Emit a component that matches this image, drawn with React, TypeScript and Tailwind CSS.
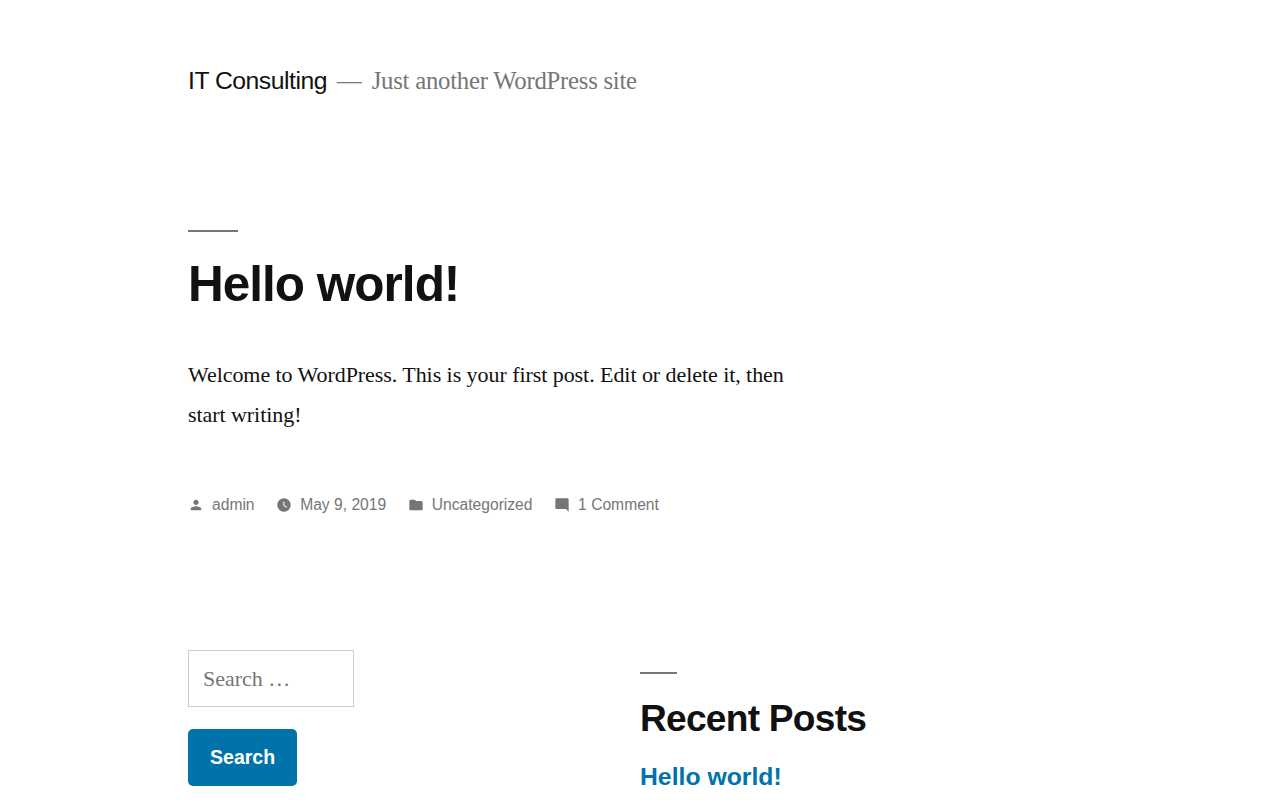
const sans = "font-['Liberation_Sans',Arial,sans-serif]";
const serif = "font-['Liberation_Serif','Times_New_Roman',serif]";

function PersonIcon() {
  return (
    <svg viewBox="0 0 24 24" className="h-4 w-4 fill-current">
      <path d="M12 12c2.21 0 4-1.79 4-4s-1.79-4-4-4-4 1.79-4 4 1.79 4 4 4zm0 2c-2.67 0-8 1.34-8 4v2h16v-2c0-2.66-5.33-4-8-4z" />
    </svg>
  );
}

function ClockIcon() {
  return (
    <svg viewBox="0 0 24 24" className="h-4 w-4 fill-current">
      <path d="M11.99 2C6.47 2 2 6.48 2 12s4.47 10 9.99 10C17.52 22 22 17.52 22 12S17.52 2 11.99 2zM16.2 16.2L11 13V7h1.5v5.2l4.5 2.7-.8 1.3z" />
    </svg>
  );
}

function FolderIcon() {
  return (
    <svg viewBox="0 0 24 24" className="h-4 w-4 fill-current">
      <path d="M10 4H4c-1.1 0-1.99.9-1.99 2L2 18c0 1.1.9 2 2 2h16c1.1 0 2-.9 2-2V8c0-1.1-.9-2-2-2h-8l-2-2z" />
    </svg>
  );
}

function CommentIcon() {
  return (
    <svg viewBox="0 0 24 24" className="h-4 w-4 fill-current">
      <path d="M21.99 4c0-1.1-.89-2-1.99-2H4c-1.1 0-2 .9-2 2v12c0 1.1.9 2 2 2h14l4 4-.01-18z" />
    </svg>
  );
}

function MetaItem({ icon, label }: { icon: React.ReactNode; label: string }) {
  return (
    <span className="flex items-center gap-2">
      {icon}
      <span>{label}</span>
    </span>
  );
}

export default function App() {
  return (
    <div className={`h-[800px] overflow-hidden bg-white px-[188px] text-[#111] antialiased ${sans}`}>
      <header className="flex h-[162px] items-start pt-[64px] text-[24.75px] leading-[34px]">
        <span className="tracking-[-0.02em]">IT Consulting</span>
        <span className={`ml-[10px] mr-[10px] text-[#767676] ${serif}`}>—</span>
        <span className={`tracking-[-0.01em] text-[#767676] ${serif}`}>Just another WordPress site</span>
      </header>

      <main className="pt-[68px]">
        <div className="h-[2px] w-[50px] bg-[#767676]" />
        <h1 className="mt-[22px] text-[49.5px] font-bold leading-[60px] tracking-[-0.02em]">Hello world!</h1>
        <p className={`mt-[41px] w-[630px] text-[22px] leading-[40px] tracking-[-0.06px] ${serif}`}>
          Welcome to WordPress. This is your first post. Edit or delete it, then start writing!
        </p>
        <div className="mt-[58px] flex gap-[21.6px] text-[15.64px] leading-[24px] text-[#767676]">
          <MetaItem icon={<PersonIcon />} label="admin" />
          <MetaItem icon={<ClockIcon />} label="May 9, 2019" />
          <MetaItem icon={<FolderIcon />} label="Uncategorized" />
          <MetaItem icon={<CommentIcon />} label="1 Comment" />
        </div>
      </main>

      <footer className="mt-[133px] grid grid-cols-[452px_1fr]">
        <div>
          <div className={`flex h-[57px] w-[166px] items-center border border-[#cccccc] px-[14px] text-[22px] text-[#767676] ${serif}`}>
            Search …
          </div>
          <button className="mt-[22px] h-[57px] rounded-[5px] bg-[#0073aa] px-[22px] text-[19.55px] font-bold text-white">
            Search
          </button>
        </div>
        <div className="pt-[22px]">
          <div className="h-[2px] w-[37px] bg-[#767676]" />
          <h2 className="mt-[21px] text-[37.125px] font-bold leading-[46px] tracking-[-0.02em]">Recent Posts</h2>
          <p className="mt-[20px] text-[24.75px] font-bold leading-[32px] text-[#0073aa]">Hello world!</p>
        </div>
      </footer>
    </div>
  );
}
